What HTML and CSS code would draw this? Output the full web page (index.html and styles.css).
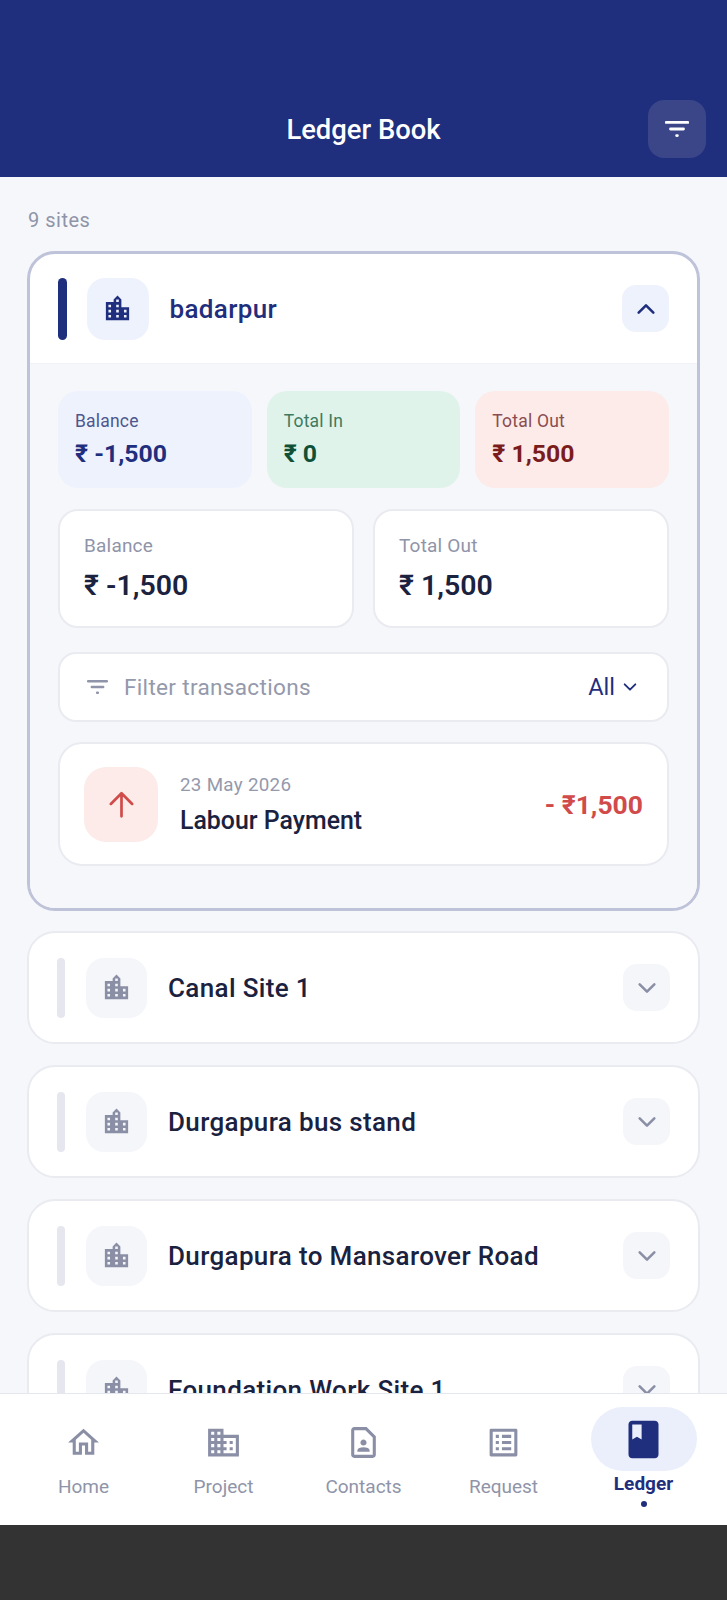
FILE: index.html
```html
<!DOCTYPE html>
<html lang="en">
<head>
    <meta charset="UTF-8">
    <meta name="viewport" content="width=device-width, initial-scale=1.0">
    <title>Ledger Book</title>
    <link rel="stylesheet" href="styles.css">
</head>
<body>
    <svg class="icon-defs" aria-hidden="true">
        <symbol id="city" viewBox="0 0 24 24"><path d="M15 11V5l-3-3-3 3v2H3v14h18V11h-6zm-8 8H5v-2h2v2zm0-4H5v-2h2v2zm0-4H5V9h2v2zm6 8h-2v-2h2v2zm0-4h-2v-2h2v2zm0-4h-2V9h2v2zm0-4h-2V5h2v2zm6 12h-2v-2h2v2zm0-4h-2v-2h2v2z"/></symbol>
        <symbol id="chevron-down" viewBox="0 0 24 24"><path d="M4 8l8 8 8-8" fill="none" stroke="currentColor" stroke-width="2.8" stroke-linecap="round" stroke-linejoin="round"/></symbol>
        <symbol id="chevron-up" viewBox="0 0 24 24"><path d="M4 16l8-8 8 8" fill="none" stroke="currentColor" stroke-width="2.8" stroke-linecap="round" stroke-linejoin="round"/></symbol>
        <symbol id="filter" viewBox="0 0 24 16"><path d="M1.2 1.4h21.6M5.5 8h13M11.6 14.6h.8" fill="none" stroke="currentColor" stroke-width="2.8" stroke-linecap="round"/></symbol>
    </svg>

    <div class="app">
        <header class="topbar">
            <span></span>
            <h1 class="topbar-title">Ledger Book</h1>
            <button class="topbar-btn" type="button" aria-label="Filter">
                <svg class="topbar-filter"><use href="#filter"/></svg>
            </button>
        </header>

        <main class="content">
            <p class="site-count">9 sites</p>

            <section class="site-card site-card-open">
                <div class="site-head">
                    <span class="site-bar"></span>
                    <span class="site-icon"><svg><use href="#city"/></svg></span>
                    <span class="site-name">badarpur</span>
                    <span class="site-toggle"><svg><use href="#chevron-up"/></svg></span>
                </div>

                <div class="site-body">
                    <div class="stats">
                        <div class="stat stat-blue">
                            <div class="stat-label">Balance</div>
                            <div class="stat-value">₹ -1,500</div>
                        </div>
                        <div class="stat stat-green">
                            <div class="stat-label">Total In</div>
                            <div class="stat-value">₹ 0</div>
                        </div>
                        <div class="stat stat-red">
                            <div class="stat-label">Total Out</div>
                            <div class="stat-value">₹ 1,500</div>
                        </div>
                    </div>

                    <div class="totals">
                        <div class="total">
                            <div class="total-label">Balance</div>
                            <div class="total-value">₹ -1,500</div>
                        </div>
                        <div class="total">
                            <div class="total-label">Total Out</div>
                            <div class="total-value">₹ 1,500</div>
                        </div>
                    </div>

                    <div class="filter-row">
                        <svg class="filter-icon"><use href="#filter"/></svg>
                        <span class="filter-text">Filter transactions</span>
                        <span class="filter-value">All</span>
                        <svg class="filter-chevron"><use href="#chevron-down"/></svg>
                    </div>

                    <div class="txn">
                        <span class="txn-icon">
                            <svg viewBox="0 0 24 24"><path d="M12 22.5V2M2.5 11.5L12 2l9.5 9.5" fill="none" stroke="currentColor" stroke-width="2.4" stroke-linecap="round" stroke-linejoin="round"/></svg>
                        </span>
                        <div class="txn-info">
                            <div class="txn-date">23 May 2026</div>
                            <div class="txn-title">Labour Payment</div>
                        </div>
                        <div class="txn-amount">- ₹1,500</div>
                    </div>
                </div>
            </section>

            <section class="site-card">
                <div class="site-head">
                    <span class="site-bar"></span>
                    <span class="site-icon"><svg><use href="#city"/></svg></span>
                    <span class="site-name">Canal Site 1</span>
                    <span class="site-toggle"><svg><use href="#chevron-down"/></svg></span>
                </div>
            </section>

            <section class="site-card">
                <div class="site-head">
                    <span class="site-bar"></span>
                    <span class="site-icon"><svg><use href="#city"/></svg></span>
                    <span class="site-name">Durgapura bus stand</span>
                    <span class="site-toggle"><svg><use href="#chevron-down"/></svg></span>
                </div>
            </section>

            <section class="site-card">
                <div class="site-head">
                    <span class="site-bar"></span>
                    <span class="site-icon"><svg><use href="#city"/></svg></span>
                    <span class="site-name">Durgapura to Mansarover Road</span>
                    <span class="site-toggle"><svg><use href="#chevron-down"/></svg></span>
                </div>
            </section>

            <section class="site-card">
                <div class="site-head">
                    <span class="site-bar"></span>
                    <span class="site-icon"><svg><use href="#city"/></svg></span>
                    <span class="site-name">Foundation Work Site 1</span>
                    <span class="site-toggle"><svg><use href="#chevron-down"/></svg></span>
                </div>
            </section>
        </main>

        <nav class="bottom-nav">
            <a class="nav-item">
                <span class="nav-icon"><svg viewBox="0 0 24 24"><path d="M12 5.69l5 4.5V18h-2v-6H9v6H7v-7.81l5-4.5M12 3L2 12h3v8h6v-6h2v6h6v-8h3L12 3z"/></svg></span>
                <span class="nav-label">Home</span>
            </a>
            <a class="nav-item">
                <span class="nav-icon"><svg viewBox="0 0 24 24"><path d="M12 7V3H2v18h20V7H12zM6 19H4v-2h2v2zm0-4H4v-2h2v2zm0-4H4V9h2v2zm0-4H4V5h2v2zm4 12H8v-2h2v2zm0-4H8v-2h2v2zm0-4H8V9h2v2zm0-4H8V5h2v2zm10 12h-8v-2h2v-2h-2v-2h2v-2h-2V9h8v10zm-2-8h-2v2h2v-2zm0 4h-2v2h2v-2z"/></svg></span>
                <span class="nav-label">Project</span>
            </a>
            <a class="nav-item">
                <span class="nav-icon"><svg viewBox="0 0 24 24"><path d="M13.17 4L18 8.83V20H6V4h7.17M14 2H6c-1.1 0-2 .9-2 2v16c0 1.1.9 2 2 2h12c1.1 0 2-.9 2-2V8l-6-6zm-2 12c1.1 0 2-.9 2-2s-.9-2-2-2-2 .9-2 2 .9 2 2 2zm4 3.43c0-.81-.48-1.53-1.22-1.85-.85-.37-1.79-.58-2.78-.58s-1.93.21-2.78.58C8.48 15.9 8 16.62 8 17.43V18h8v-.57z"/></svg></span>
                <span class="nav-label">Contacts</span>
            </a>
            <a class="nav-item">
                <span class="nav-icon"><svg viewBox="0 0 24 24"><path d="M19 5v14H5V5h14m1.1-2H3.9c-.5 0-.9.4-.9.9v16.2c0 .4.4.9.9.9h16.2c.4 0 .9-.5.9-.9V3.9c0-.5-.5-.9-.9-.9zM11 7h6v2h-6V7zm0 4h6v2h-6v-2zm0 4h6v2h-6v-2zM7 7h2v2H7V7zm0 4h2v2H7v-2zm0 4h2v2H7v-2z"/></svg></span>
                <span class="nav-label">Request</span>
            </a>
            <a class="nav-item nav-item-active">
                <span class="nav-icon"><svg viewBox="0 0 24 24"><path d="M18 2H6c-1.1 0-2 .9-2 2v16c0 1.1.9 2 2 2h12c1.1 0 2-.9 2-2V4c0-1.1-.9-2-2-2zM6 4h5v8l-2.5-1.5L6 12V4z"/></svg></span>
                <span class="nav-label">Ledger</span>
                <span class="nav-dot"></span>
            </a>
        </nav>

        <div class="system-bar"></div>
    </div>
</body>
</html>
```

FILE: styles.css
```css
* {
    box-sizing: border-box;
}

body {
    margin: 0;
    font-family: Roboto, "Noto Sans", sans-serif;
    background-color: #333333;
}

.icon-defs {
    display: none;
}

.app {
    height: 1600px;
    display: flex;
    flex-direction: column;
    overflow: hidden;
    background-color: #f6f7fb;
}

/* top bar */
.topbar {
    flex: none;
    display: grid;
    grid-template-columns: 58px 1fr 58px;
    align-items: center;
    height: 177px;
    padding: 100px 21px 19px;
    background-color: #1f2e7d;
}

.topbar-title {
    margin: 2px 0 0;
    text-align: center;
    color: #ffffff;
    font-size: 27.4px;
    font-weight: 500;
}

.topbar-btn {
    width: 58px;
    height: 58px;
    padding: 0;
    border: none;
    border-radius: 16px;
    display: flex;
    align-items: center;
    justify-content: center;
    color: #ffffff;
    background-color: #3b4689;
}

.topbar-filter {
    width: 24px;
    height: 16px;
}

/* scrolling list */
.content {
    flex: 1;
    min-height: 0;
    overflow: hidden;
    padding: 0 27px;
}

.site-count {
    margin: 0;
    padding: 31px 0 0 1px;
    height: 74px;
    line-height: 24px;
    font-size: 20px;
    letter-spacing: 0.5px;
    color: #8f94a8;
}

.site-card {
    margin-bottom: 21px;
    border: 2px solid #e9ebf1;
    border-radius: 28px;
    background-color: #ffffff;
    overflow: hidden;
}

.site-card-open {
    margin-bottom: 20px;
    border: 3px solid #bfc3d9;
}

.site-head {
    height: 109px;
    display: flex;
    align-items: center;
    padding: 0 28px;
}

.site-card-open .site-head {
    padding: 0 28px 0 27.5px;
}

.site-bar {
    flex: none;
    width: 8px;
    height: 60px;
    border-radius: 4px;
    background-color: #e6e7ee;
}

.site-icon {
    flex: none;
    width: 61px;
    height: 60px;
    margin-left: 21px;
    border-radius: 18px;
    display: flex;
    align-items: center;
    justify-content: center;
    color: #8a8fa6;
    background-color: #f5f6fa;
}

.site-icon svg {
    width: 31px;
    height: 31px;
    fill: currentColor;
}

.site-name {
    margin-left: 21px;
    font-size: 26px;
    font-weight: 500;
    letter-spacing: 0.35px;
    color: #1a2240;
}

.site-toggle {
    flex: none;
    width: 47px;
    height: 47px;
    margin-left: auto;
    border-radius: 14px;
    display: flex;
    align-items: center;
    justify-content: center;
    color: #8a8fa6;
    background-color: #f5f6fa;
}

.site-toggle svg {
    width: 22px;
    height: 22px;
}

.site-card-open .site-bar {
    width: 9px;
    height: 62px;
    border-radius: 5px;
    background-color: #1f2e7d;
}

.site-card-open .site-icon {
    width: 62px;
    height: 62px;
    margin-left: 20px;
    color: #1f2e7d;
    background-color: #eef2fd;
}

.site-card-open .site-name {
    margin-left: 21px;
    color: #1f2e7d;
}

.site-card-open .site-toggle {
    color: #1f2e7d;
    background-color: #eef2fd;
}

.site-body {
    padding: 27px 28px 42px;
    border-top: 1px solid #f1f2f7;
    background-color: #f6f7fb;
}

/* coloured stats */
.stats {
    display: grid;
    grid-template-columns: repeat(3, 1fr);
    gap: 15px;
    margin-bottom: 21px;
}

.stat {
    height: 97px;
    padding: 19px 17px 0;
    border-radius: 20px;
}

.stat-label {
    line-height: 22px;
    font-size: 17.5px;
    letter-spacing: 0.2px;
}

.stat-value {
    margin-top: 8px;
    line-height: 28px;
    font-size: 24.8px;
    font-weight: 700;
}

.stat-blue {
    background-color: #eef2fd;
}

.stat-blue .stat-label {
    color: #4d578f;
}

.stat-blue .stat-value {
    color: #1f2e7d;
}

.stat-green {
    background-color: #e0f3ea;
}

.stat-green .stat-label {
    color: #3f7a60;
}

.stat-green .stat-value {
    color: #0e5138;
}

.stat-red {
    background-color: #fcebe9;
}

.stat-red .stat-label {
    color: #8a4d50;
}

.stat-red .stat-value {
    color: #7a1c1c;
}

/* white totals */
.totals {
    display: grid;
    grid-template-columns: repeat(2, 1fr);
    gap: 19px;
    margin-bottom: 24px;
}

.total {
    height: 119px;
    padding: 23px 24px 0;
    border: 2px solid #e9ebf1;
    border-radius: 20px;
    background-color: #ffffff;
}

.total-label {
    line-height: 24px;
    font-size: 19px;
    letter-spacing: 0.2px;
    color: #8f94a8;
}

.total-value {
    margin-top: 11px;
    line-height: 34px;
    font-size: 28.5px;
    font-weight: 600;
    color: #1a2240;
}

/* filter row */
.filter-row {
    height: 70px;
    margin-bottom: 20px;
    padding: 0 29px 0 27px;
    display: flex;
    align-items: center;
    border: 2px solid #e9ebf1;
    border-radius: 18px;
    background-color: #ffffff;
}

.filter-icon {
    flex: none;
    width: 21px;
    height: 14px;
    color: #8f94a8;
}

.filter-text {
    margin-left: 16px;
    font-size: 22.6px;
    letter-spacing: 0.3px;
    color: #9499ac;
}

.filter-value {
    margin-left: auto;
    font-size: 23.5px;
    color: #1f2e7d;
}

.filter-chevron {
    flex: none;
    width: 16px;
    height: 16px;
    margin-left: 7px;
    color: #1f2e7d;
}

/* transaction */
.txn {
    height: 124px;
    padding: 0 24px;
    display: flex;
    align-items: center;
    border: 2px solid #e9ebf1;
    border-radius: 24px;
    background-color: #ffffff;
}

.txn-icon {
    flex: none;
    width: 74px;
    height: 75px;
    border-radius: 22px;
    display: flex;
    align-items: center;
    justify-content: center;
    color: #d14b4b;
    background-color: #fcebe9;
}

.txn-icon svg {
    width: 27px;
    height: 27px;
}

.txn-info {
    margin-left: 22px;
}

.txn-date {
    line-height: 24px;
    font-size: 18.8px;
    letter-spacing: 0.3px;
    color: #9499ac;
}

.txn-title {
    margin-top: 9px;
    line-height: 30px;
    font-size: 24.9px;
    font-weight: 500;
    color: #1a2240;
}

.txn-amount {
    margin-left: auto;
    font-size: 26.5px;
    font-weight: 700;
    color: #d14b4b;
}

/* bottom nav */
.bottom-nav {
    flex: none;
    height: 132px;
    padding: 13px 13.5px 0;
    display: grid;
    grid-template-columns: repeat(5, 1fr);
    border-top: 1px solid #e5e7ee;
    background-color: #ffffff;
}

.nav-item {
    padding-top: 3px;
    display: flex;
    flex-direction: column;
    align-items: center;
    color: #8a8fa6;
}

.nav-icon {
    width: 106px;
    height: 64px;
    border-radius: 32px;
    display: flex;
    align-items: center;
    justify-content: center;
}

.nav-icon svg {
    width: 37px;
    height: 37px;
    fill: currentColor;
}

.nav-label {
    margin-top: 1px;
    line-height: 24px;
    font-size: 19px;
    color: #8f94a8;
}

.nav-item-active {
    padding-top: 0;
    color: #1f2e7d;
}

.nav-item-active .nav-icon {
    background-color: #eaeffb;
}

.nav-item-active .nav-icon svg {
    width: 45px;
    height: 45px;
}

.nav-item-active .nav-label {
    font-weight: 700;
    color: #1f2e7d;
}

.nav-dot {
    width: 6px;
    height: 6px;
    margin-top: 5px;
    border-radius: 50%;
    background-color: #1f2e7d;
}

.system-bar {
    flex: none;
    height: 75px;
    background-color: #333333;
}
```
